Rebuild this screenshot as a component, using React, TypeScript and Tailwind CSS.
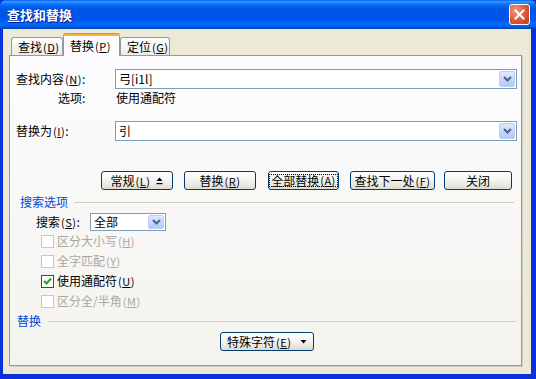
import React from 'react'

const font = "font-['Noto_Sans_CJK_SC','Noto_Sans',sans-serif]"

function Chevron() {
  return (
    <svg width="9" height="6" viewBox="0 0 9 6">
      <path d="M1 1 L4.5 4.5 L8 1" fill="none" stroke="#4d6185" strokeWidth="2" />
    </svg>
  )
}

function Combo({ value, className }: { value: string; className: string }) {
  return (
    <div className={`flex items-stretch border border-[#7f9db9] bg-white p-px ${className}`}>
      <span className="flex flex-1 items-center pl-[2px] text-[12px] text-black">{value}</span>
      <div className="flex w-[16px] items-center justify-center rounded-[2px] border border-[#bccff8] bg-gradient-to-b from-[#dde8fe] to-[#b4c8f6]">
        <Chevron />
      </div>
    </div>
  )
}

// shortcut letter, e.g. (N)
function Key({ k }: { k: string }) {
  return (
    <span className="ml-[1px] whitespace-nowrap text-[11px] tracking-[0.5px]">
      (<span className="underline underline-offset-1">{k}</span>)
    </span>
  )
}

function XpButton({
  children,
  className,
  isDefault,
}: {
  children: React.ReactNode
  className: string
  isDefault?: boolean
}) {
  return (
    <div
      className={`flex h-[19px] shrink-0 items-center justify-center rounded-[3px] border border-[#003c74] bg-gradient-to-b from-white via-[#f3f3ef] to-[#dedcd2] text-[12px] text-black ${className}`}
    >
      {isDefault ? (
        <span className="flex h-[13px] items-center border border-dotted border-black px-px leading-none">
          {children}
        </span>
      ) : (
        children
      )}
    </div>
  )
}

function Check({ label, k, checked, disabled }: { label: string; k: string; checked?: boolean; disabled?: boolean }) {
  return (
    <div className={`flex h-[20px] items-center pl-[31px] text-[12px] ${disabled ? 'text-[#aca899]' : 'text-black'}`}>
      <div
        className={`flex h-[13px] w-[13px] items-center justify-center border bg-white ${
          disabled ? 'border-[#cac8bb]' : 'border-[#1c5180]'
        }`}
      >
        {checked && (
          <svg width="9" height="9" viewBox="0 0 9 9">
            <path d="M1 4 L3.5 6.5 L8 1.5" fill="none" stroke="#21a121" strokeWidth="2" />
          </svg>
        )}
      </div>
      <span className="ml-[3px]">
        {label}
        <Key k={k} />
      </span>
    </div>
  )
}

function Tab({ label, k, selected, className }: { label: string; k: string; selected?: boolean; className: string }) {
  if (selected) {
    return (
      <div className={`relative z-10 -mb-px flex h-[23px] shrink-0 flex-col rounded-t-[3px] border-x border-[#919b9c] bg-[#fcfcfe] ${className}`}>
        <div className="-mx-px h-[3px] rounded-t-[3px] bg-gradient-to-b from-[#e68b2c] to-[#ffc73c]" />
        <div className="flex flex-1 items-center pl-[6px] text-[12px] text-black">
          {label}
          <Key k={k} />
        </div>
      </div>
    )
  }
  return (
    <div
      className={`flex h-[18px] shrink-0 items-center rounded-t-[3px] border-x border-t border-[#919b9c] bg-gradient-to-b from-white to-[#ecebe6] pl-[6px] text-[12px] text-black ${className}`}
    >
      {label}
      <Key k={k} />
    </div>
  )
}

export default function App() {
  return (
    <div className={`flex h-[379px] w-[536px] flex-col whitespace-nowrap bg-[#0831d9] ${font} leading-[14px]`}>
      <div className="flex h-[29px] items-center justify-between rounded-t-[6px] bg-[linear-gradient(180deg,#0058ee_0%,#3593ff_5%,#288eff_8%,#127dff_12%,#036ffc_16%,#0262ee_22%,#0057e5_30%,#0054e3_40%,#0055eb_60%,#005bf5_72%,#026afe_82%,#0062ef_90%,#0052d6_95%,#0040ab_100%)] pl-[7px] pr-[6px]">
        <span className="text-[13px] font-bold text-white [text-shadow:1px_1px_0_#0a1883]">查找和替换</span>
        <div className="flex h-[21px] w-[21px] items-center justify-center rounded-[3px] border border-white bg-[radial-gradient(circle_at_30%_30%,#f09a80,#e0552f_55%,#c4381b)]">
          <svg width="11" height="11" viewBox="0 0 11 11">
            <path d="M1.5 1.5 L9.5 9.5 M9.5 1.5 L1.5 9.5" stroke="white" strokeWidth="2" strokeLinecap="square" />
          </svg>
        </div>
      </div>

      <div className="ml-[3px] mr-[5px] mb-[5px] flex flex-1 flex-col bg-[#ece9d8] pl-[6px] pr-[9px]">
        <div className="flex h-[26px] items-end pl-[2px]">
          <Tab label="查找" k="D" className="w-[52px]" />
          <Tab label="替换" k="P" selected className="w-[57px]" />
          <Tab label="定位" k="G" className="w-[50px]" />
        </div>

        <div className="flex h-[311px] flex-col border border-[#919b9c] bg-gradient-to-b from-[#fcfcfe] to-[#f4f3ee] shadow-[1px_1px_0_#d0cec2] text-[12px] text-black">
          <div className="mt-[13px] flex items-center">
            <span className="w-[105px] shrink-0 pl-[6px]">
              查找内容<Key k="N" />:
            </span>
            <Combo value="弓[i1l]" className="h-[20px] w-[402px]" />
          </div>
          <div className="mt-[2px] flex h-[14px] items-center">
            <span className="w-[106px] shrink-0 pl-[48px]">选项:</span>
            <span>使用通配符</span>
          </div>
          <div className="mt-[16px] flex items-center">
            <span className="w-[105px] shrink-0 pl-[6px]">
              替换为<Key k="I" />:
            </span>
            <Combo value="引" className="h-[20px] w-[402px]" />
          </div>

          <div className="mt-[30px] flex">
            <XpButton className="ml-[91px] w-[72px]">
              常规<Key k="L" />
              <svg width="7" height="8" viewBox="0 0 7 8" className="ml-[6px]">
                <path d="M3.5 0.5 L6.5 4 L0.5 4 Z" fill="black" />
                <rect x="0.5" y="6" width="6" height="1.2" fill="black" />
              </svg>
            </XpButton>
            <XpButton className="ml-[11px] w-[72px]">
              替换<Key k="R" />
            </XpButton>
            <XpButton isDefault className="ml-[12px] w-[71px]">
              全部替换<Key k="A" />
            </XpButton>
            <XpButton className="ml-[11px] w-[85px]">
              查找下一处<Key k="F" />
            </XpButton>
            <XpButton className="ml-[9px] w-[68px]">关闭</XpButton>
          </div>

          <div className="mt-[5px] flex h-[14px] items-center pl-[10px]">
            <span className="text-[#0046d5]">搜索选项</span>
            <div className="ml-[6px] mr-[7px] h-px flex-1 bg-[#d0d0bf]" />
          </div>

          <div className="mt-[4px] flex items-center pl-[26px]">
            <span className="w-[54px] shrink-0">
              搜索<Key k="S" />:
            </span>
            <Combo value="全部" className="h-[18px] w-[76px]" />
          </div>

          <Check label="区分大小写" k="H" disabled />
          <Check label="全字匹配" k="Y" disabled />
          <Check label="使用通配符" k="U" checked />
          <Check label="区分全/半角" k="M" disabled />

          <div className="mt-[3px] flex h-[14px] items-center pl-[7px]">
            <span className="text-[#0046d5]">替换</span>
            <div className="ml-[7px] mr-[5px] h-px flex-1 bg-[#d0d0bf]" />
          </div>

          <div className="mt-[4px] flex">
            <XpButton className="ml-[210px] w-[94px] justify-start pl-[6px]">
              特殊字符<Key k="E" />
              <svg width="7" height="4" viewBox="0 0 7 4" className="ml-[9px]">
                <path d="M0.5 0 L6.5 0 L3.5 3.5 Z" fill="black" />
              </svg>
            </XpButton>
          </div>
        </div>
      </div>
    </div>
  )
}
